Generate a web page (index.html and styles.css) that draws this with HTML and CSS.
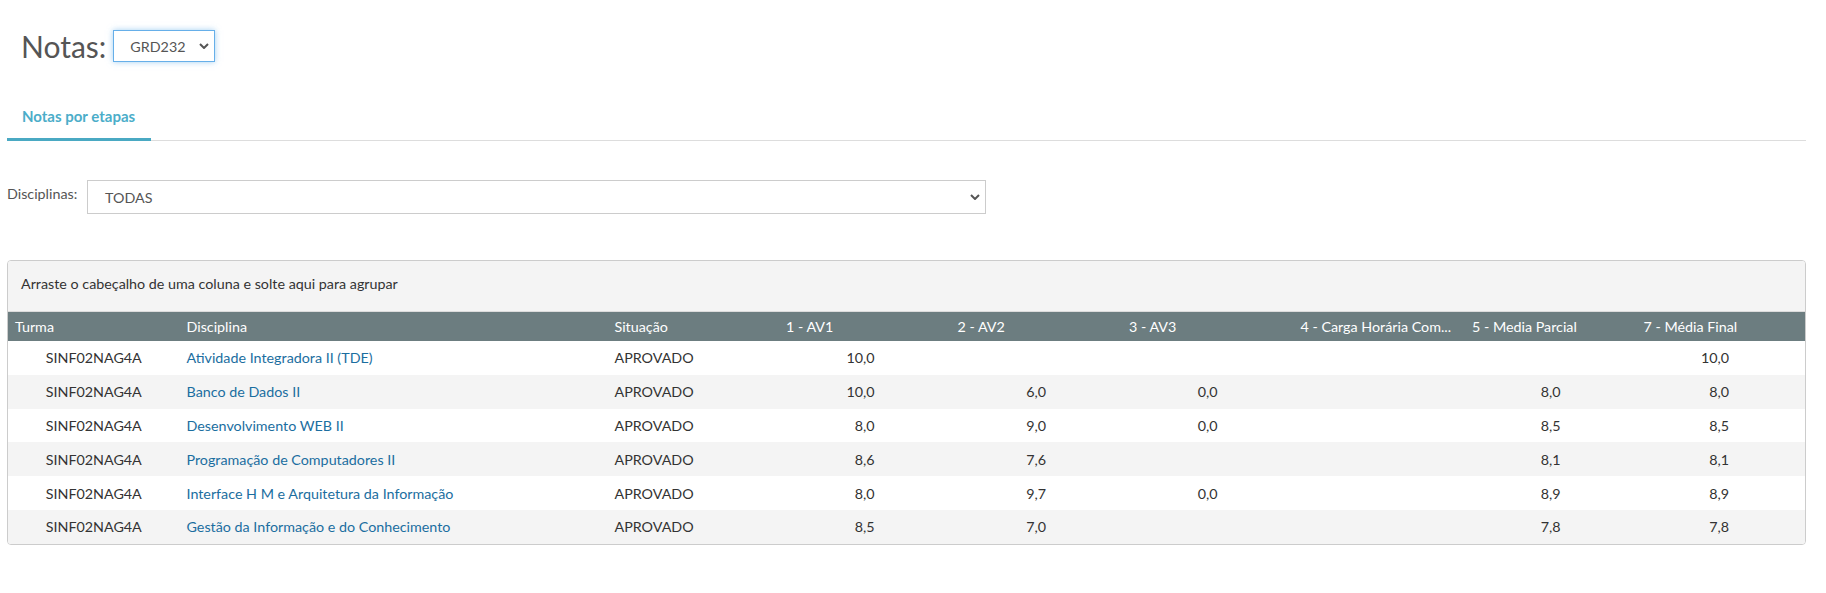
FILE: index.html
```html
<!DOCTYPE html>
<html lang="pt">
<head>
<meta charset="utf-8">
<title>Notas</title>
<link rel="stylesheet" href="styles.css">
</head>
<body>
<div class="page">
  <div class="title-row">
    <h1 class="title">Notas:</h1>
    <div class="select select-focus period">
      <span>GRD232</span>
      <svg class="caret" viewBox="0 0 10 6" width="10" height="6"><path d="M1 1 L5 5 L9 1" fill="none" stroke="#555" stroke-width="2"/></svg>
    </div>
  </div>

  <div class="tabs">
    <div class="tab active">Notas por etapas</div>
  </div>

  <div class="filter-row">
    <label class="filter-label">Disciplinas:</label>
    <div class="select discipline">
      <span>TODAS</span>
      <svg class="caret" viewBox="0 0 10 6" width="10" height="6"><path d="M1 1 L5 5 L9 1" fill="none" stroke="#555" stroke-width="2"/></svg>
    </div>
  </div>

  <div class="grid">
    <div class="group-panel">Arraste o cabeçalho de uma coluna e solte aqui para agrupar</div>
    <table class="table">
      <colgroup>
        <col class="c-std"><col class="c-disc"><col class="c-std"><col class="c-std"><col class="c-std"><col class="c-std"><col class="c-std"><col class="c-std"><col>
      </colgroup>
      <thead>
        <tr>
          <th>Turma</th><th>Disciplina</th><th>Situação</th><th>1 - AV1</th><th>2 - AV2</th><th>3 - AV3</th><th>4 - Carga Horária Com...</th><th>5 - Media Parcial</th><th>7 - Média Final</th>
        </tr>
      </thead>
      <tbody>
        <tr><td class="ctr">SINF02NAG4A</td><td><a>Atividade Integradora II (TDE)</a></td><td>APROVADO</td><td class="num">10,0</td><td class="num"></td><td class="num"></td><td></td><td class="num"></td><td class="num">10,0</td></tr>
        <tr><td class="ctr">SINF02NAG4A</td><td><a>Banco de Dados II</a></td><td>APROVADO</td><td class="num">10,0</td><td class="num">6,0</td><td class="num">0,0</td><td></td><td class="num">8,0</td><td class="num">8,0</td></tr>
        <tr><td class="ctr">SINF02NAG4A</td><td><a>Desenvolvimento WEB II</a></td><td>APROVADO</td><td class="num">8,0</td><td class="num">9,0</td><td class="num">0,0</td><td></td><td class="num">8,5</td><td class="num">8,5</td></tr>
        <tr><td class="ctr">SINF02NAG4A</td><td><a>Programação de Computadores II</a></td><td>APROVADO</td><td class="num">8,6</td><td class="num">7,6</td><td class="num"></td><td></td><td class="num">8,1</td><td class="num">8,1</td></tr>
        <tr><td class="ctr">SINF02NAG4A</td><td><a>Interface H M e Arquitetura da Informação</a></td><td>APROVADO</td><td class="num">8,0</td><td class="num">9,7</td><td class="num">0,0</td><td></td><td class="num">8,9</td><td class="num">8,9</td></tr>
        <tr><td class="ctr">SINF02NAG4A</td><td><a>Gestão da Informação e do Conhecimento</a></td><td>APROVADO</td><td class="num">8,5</td><td class="num">7,0</td><td class="num"></td><td></td><td class="num">7,8</td><td class="num">7,8</td></tr>
      </tbody>
    </table>
  </div>
</div>
</body>
</html>
```

FILE: styles.css
```css
* { box-sizing: border-box; }
html, body { margin: 0; padding: 0; background: #fff; }
body {
  font-family: "Lato", "Open Sans", sans-serif;
  font-size: 14.3px;
  color: #333;
}
.page {
  width: 1806px;
  padding: 30px 0 0 7px;
}
.title-row {
  display: flex;
  align-items: center;
  padding-left: 14px;
  height: 32px;
}
.title {
  margin: 0 7px 0 0;
  font-weight: 400;
  font-size: 30px;
  color: #555;
  line-height: 32px;
}
.select {
  display: flex;
  align-items: center;
  justify-content: space-between;
  border: 1px solid #ccc;
  background: #fff;
  color: #555;
  font-size: 14.3px;
}
.select-focus {
  border-color: #66afe9;
  box-shadow: 0 0 6px rgba(102, 175, 233, 0.6);
}
.period {
  width: 102px;
  height: 32px;
  padding: 0 5px 0 16px;
}
.caret { display: block; }
.tabs {
  margin-top: 40px;
  border-bottom: 1px solid #ddd;
  display: flex;
}
.tab {
  width: 144px;
  padding: 5px 0 13px 15px;
  font-size: 15px;
  font-weight: 700;
  color: #4badc9;
}
.tab.active {
  border-bottom: 3px solid #4aa9c3;
  margin-bottom: -1px;
}
.filter-row {
  margin-top: 39px;
  display: flex;
  align-items: flex-start;
  gap: 10px;
}
.filter-label {
  color: #555;
  padding-top: 5px;
  width: 70px;
}
.discipline {
  width: 899px;
  height: 34px;
  padding: 0 5px 0 17px;
}
.grid {
  margin-top: 46px;
  border: 1px solid #ccc;
  border-radius: 4px;
  overflow: hidden;
  width: 1799px;
}
.group-panel {
  background: #f4f4f4;
  height: 51px;
  padding: 14px 0 0 13px;
  color: #333;
  border-bottom: 1px solid #dcdcdc;
}
.table {
  width: 100%;
  border-collapse: collapse;
  table-layout: fixed;
}
.c-std { width: 171.5px; }
.c-disc { width: 428px; }
th {
  background: #6c7d80;
  color: #fff;
  font-weight: 400;
  text-align: left;
  height: 29px;
  padding: 0 7px;
  white-space: nowrap;
  overflow: hidden;
}
td {
  height: 33.8px;
  padding: 0 7px;
  color: #333;
  white-space: nowrap;
}
tbody tr:nth-child(even) td { background: #f4f4f4; }
td a { color: #1b6ea0; }
.ctr { text-align: center; }
.num { text-align: right; padding-right: 76px; }
```
